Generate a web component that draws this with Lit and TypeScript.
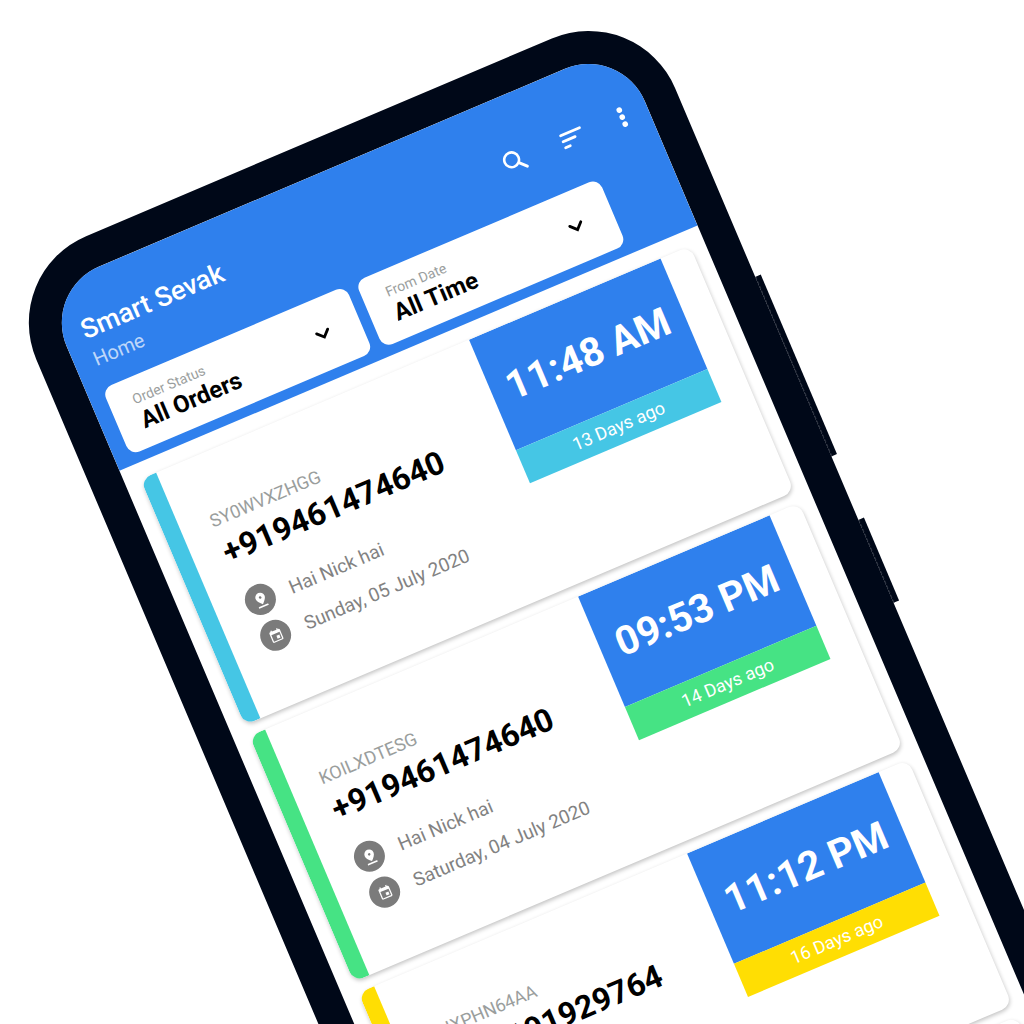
import { LitElement, html, css, svg, nothing } from "lit";
import { customElement, property } from "lit/decorators.js";

interface Order {
  tone: "cyan" | "green" | "yellow";
  code: string;
  phone: string;
  time: string;
  age: string;
  name?: string;
  date?: string;
}

const orders: Order[] = [
  { tone: "cyan", code: "SY0WVXZHGG", phone: "+919461474640", time: "11:48 AM", age: "13 Days ago", name: "Hai Nick hai", date: "Sunday, 05 July 2020" },
  { tone: "green", code: "KOILXDTESG", phone: "+919461474640", time: "09:53 PM", age: "14 Days ago", name: "Hai Nick hai", date: "Saturday, 04 July 2020" },
  { tone: "yellow", code: "XHXPHN64AA", phone: "+919191929764", time: "11:12 PM", age: "16 Days ago" },
];

const searchIcon = svg`
  <g fill="none" stroke="#fff" stroke-linecap="round">
    <circle cx="9.5" cy="16" r="7.4" stroke-width="2.6"></circle>
    <path d="M15.5 22L21.5 28" stroke-width="3"></path>
  </g>`;
const sortIcon = svg`
  <path d="M10 13H30.5M10 19.5H23M10 26H15" fill="none" stroke="#fff" stroke-width="2.8" stroke-linecap="round"></path>`;
const moreIcon = svg`
  <g fill="#fff">
    <circle cx="20" cy="12.4" r="2.8"></circle>
    <circle cx="20" cy="20" r="2.8"></circle>
    <circle cx="20" cy="27.6" r="2.8"></circle>
  </g>`;
const pinIcon = svg`
  <path fill="#fff" fill-rule="evenodd" d="M12 18.6C9 15.6 5.6 12.4 5.6 8.8a6.4 6.4 0 0 1 12.8 0C18.4 12.4 15 15.6 12 18.6zM12 7.2a1.7 1.7 0 1 0 0 3.4 1.7 1.7 0 0 0 0-3.4z"></path>
  <path d="M6 21.2H18" stroke="#fff" stroke-width="2.2" stroke-linecap="round"></path>`;
const calendarIcon = svg`
  <g transform="translate(12 12) scale(0.84) translate(-12 -11.5)">
    <path fill="#fff" d="M17 12h-5v5h5v-5zM16 1v2H8V1H6v2H5c-1.11 0-2 .9-2 2v14c0 1.1.89 2 2 2h14c1.1 0 2-.9 2-2V5c0-1.1-.9-2-2-2h-1V1h-2zm3 18H5V8h14v11z"></path>
  </g>`;

@customElement("filter-select")
export class FilterSelect extends LitElement {
  static styles = css`
    :host { display: block; flex: 0 0 264px; }
    .box {
      display: grid;
      grid-template-columns: 1fr 24px;
      align-items: center;
      box-sizing: border-box;
      height: 72px;
      padding: 0 27px 0 24px;
      border-radius: 10px;
      background: #fff;
      font-family: Roboto, sans-serif;
    }
    .field { display: flex; flex-direction: column; }
    .label { font-size: 14px; line-height: 18px; color: #9a9e9d; }
    .select {
      appearance: none;
      margin: 0;
      padding: 0;
      border: 0;
      background: none;
      font: 700 24px/28px Roboto, sans-serif;
      color: #000;
    }
  `;

  @property() label = "";
  @property() value = "";

  render() {
    return html`
      <div class="box">
        <div class="field">
          <label class="label" for="choice">${this.label}</label>
          <select class="select" id="choice"><option>${this.value}</option></select>
        </div>
        <svg width="24" height="24" viewBox="0 0 24 24" aria-hidden="true">
          <path d="M6 9l6 6 6-6" fill="none" stroke="#000" stroke-width="2.8" stroke-linecap="round"></path>
        </svg>
      </div>
    `;
  }
}

@customElement("order-card")
export class OrderCard extends LitElement {
  static styles = css`
    :host { display: block; }
    .card {
      --tone: #fff;
      display: flex;
      align-items: flex-start;
      min-height: 267px;
      border-radius: 11px;
      background: #fff;
      box-shadow: 0 2px 4px rgba(0, 0, 0, 0.24);
      overflow: hidden;
      font-family: Roboto, sans-serif;
    }
    .cyan { --tone: #45c6e5; }
    .green { --tone: #46e384; }
    .yellow { --tone: #ffde03; }
    .stripe { flex: 0 0 17px; align-self: stretch; background: var(--tone); }
    .body { flex: 1; padding: 55px 0 0 31px; }
    .code { font-size: 18px; line-height: 24px; color: #9a9e9d; }
    .phone { font-size: 32px; line-height: 44px; font-weight: 700; color: #000; }
    .facts { display: flex; flex-direction: column; gap: 6px; margin-top: 19px; }
    .fact { display: flex; gap: 16px; font-size: 19px; line-height: 33px; color: #828282; }
    .disc {
      display: grid;
      place-items: center;
      width: 31px;
      height: 31px;
      border-radius: 50%;
      background: #7b7b7b;
    }
    .when {
      flex: 0 0 208px;
      margin-right: 32px;
      text-align: center;
      color: #fff;
    }
    .time { background: #2f80ed; font-size: 40px; line-height: 120px; font-weight: 700; }
    .age { background: var(--tone); font-size: 18px; line-height: 36px; }
  `;

  @property({ attribute: false }) order?: Order;

  private fact(icon: unknown, text: string) {
    return html`
      <div class="fact">
        <span class="disc"><svg width="18" height="18" viewBox="0 0 24 24" aria-hidden="true">${icon}</svg></span>
        <span>${text}</span>
      </div>
    `;
  }

  render() {
    const o = this.order;
    if (!o) return html`<div class="card"></div>`;
    return html`
      <article class="card ${o.tone}">
        <div class="stripe"></div>
        <div class="body">
          <div class="code">${o.code}</div>
          <div class="phone">${o.phone}</div>
          <div class="facts">
            ${o.name ? this.fact(pinIcon, o.name) : nothing}
            ${o.date ? this.fact(calendarIcon, o.date) : nothing}
          </div>
        </div>
        <div class="when">
          <div class="time">${o.time}</div>
          <div class="age">${o.age}</div>
        </div>
      </article>
    `;
  }
}

@customElement("app-root")
export class AppRoot extends LitElement {
  static styles = css`
    :host {
      display: block;
      height: 100vh;
      overflow: hidden;
      background: #fff;
      font-family: Roboto, sans-serif;
    }
    .phone {
      position: relative;
      box-sizing: border-box;
      width: 694px;
      padding: 33px;
      border-radius: 94px;
      background: #000818;
      transform-origin: 0 0;
      transform: rotate(-23deg) translate(-107px, 251px);
    }
    .key {
      position: absolute;
      left: 100%;
      box-sizing: border-box;
      width: 6px;
      background: #000818;
      border-left: 1px dashed #2c3340;
    }
    .volume { top: 299px; height: 195px; }
    .power { top: 563px; height: 90px; }
    .screen { border-radius: 61px; overflow: hidden; background: #fff; }
    .header { padding: 36px 0 10px; background: #2f80ed; color: #fff; }
    .bar { display: flex; align-items: center; padding: 0 7px 0 20px; }
    .titles { flex: 1; }
    .title { margin: 0; font-size: 27px; line-height: 34px; font-weight: 500; }
    .subtitle { margin: 0; font-size: 20px; line-height: 28px; color: rgba(255, 255, 255, 0.7); }
    .actions { display: flex; gap: 14px; }
    .action { display: block; width: 40px; height: 40px; padding: 0; border: 0; background: none; }
    .filters { display: flex; gap: 11px; padding: 16px 0 0 16px; }
    .orders { display: flex; flex-direction: column; gap: 12px; padding: 16px 15px 16px 16px; }
  `;

  private action(name: string, icon: unknown) {
    return html`
      <button class="action" type="button" aria-label=${name}>
        <svg width="40" height="40" viewBox="0 0 40 40" aria-hidden="true">${icon}</svg>
      </button>
    `;
  }

  render() {
    return html`
      <div class="phone">
        <div class="key volume"></div>
        <div class="key power"></div>
        <main class="screen">
          <header class="header">
            <div class="bar">
              <div class="titles">
                <h1 class="title">Smart Sevak</h1>
                <p class="subtitle">Home</p>
              </div>
              <div class="actions">
                ${this.action("Search", searchIcon)}
                ${this.action("Sort", sortIcon)}
                ${this.action("More", moreIcon)}
              </div>
            </div>
            <div class="filters">
              <filter-select label="Order Status" value="All Orders"></filter-select>
              <filter-select label="From Date" value="All Time"></filter-select>
            </div>
          </header>
          <section class="orders">
            ${orders.map((o) => html`<order-card .order=${o}></order-card>`)}
            <order-card></order-card>
          </section>
        </main>
      </div>
    `;
  }
}
